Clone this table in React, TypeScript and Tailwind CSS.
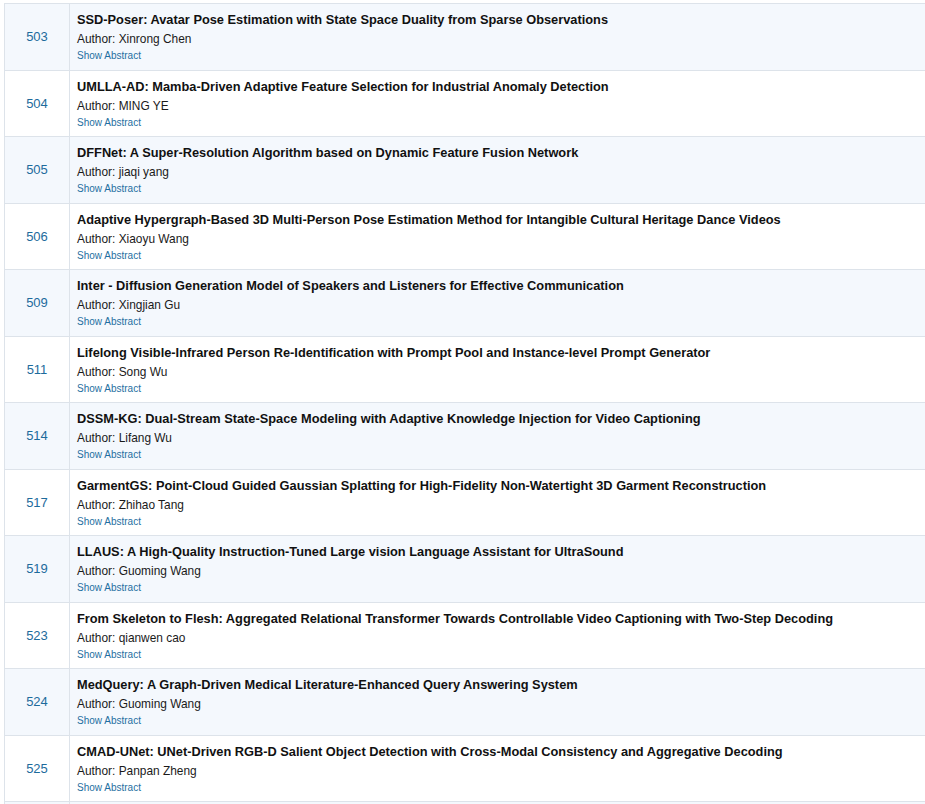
const papers = [
  { id: 503, title: "SSD-Poser: Avatar Pose Estimation with State Space Duality from Sparse Observations", author: "Xinrong Chen" },
  { id: 504, title: "UMLLA-AD: Mamba-Driven Adaptive Feature Selection for Industrial Anomaly Detection", author: "MING YE" },
  { id: 505, title: "DFFNet: A Super-Resolution Algorithm based on Dynamic Feature Fusion Network", author: "jiaqi yang" },
  { id: 506, title: "Adaptive Hypergraph-Based 3D Multi-Person Pose Estimation Method for Intangible Cultural Heritage Dance Videos", author: "Xiaoyu Wang" },
  { id: 509, title: "Inter - Diffusion Generation Model of Speakers and Listeners for Effective Communication", author: "Xingjian Gu" },
  { id: 511, title: "Lifelong Visible-Infrared Person Re-Identification with Prompt Pool and Instance-level Prompt Generator", author: "Song Wu" },
  { id: 514, title: "DSSM-KG: Dual-Stream State-Space Modeling with Adaptive Knowledge Injection for Video Captioning", author: "Lifang Wu" },
  { id: 517, title: "GarmentGS: Point-Cloud Guided Gaussian Splatting for High-Fidelity Non-Watertight 3D Garment Reconstruction", author: "Zhihao Tang" },
  { id: 519, title: "LLAUS: A High-Quality Instruction-Tuned Large vision Language Assistant for UltraSound", author: "Guoming Wang" },
  { id: 523, title: "From Skeleton to Flesh: Aggregated Relational Transformer Towards Controllable Video Captioning with Two-Step Decoding", author: "qianwen cao" },
  { id: 524, title: "MedQuery: A Graph-Driven Medical Literature-Enhanced Query Answering System", author: "Guoming Wang" },
  { id: 525, title: "CMAD-UNet: UNet-Driven RGB-D Salient Object Detection with Cross-Modal Consistency and Aggregative Decoding", author: "Panpan Zheng" },
];

export default function App() {
  return (
    <div
      className="h-[804px] w-[925px] overflow-hidden bg-white pl-[4px] pt-[3px]"
      style={{ fontFamily: '"Liberation Sans", Arial, Helvetica, sans-serif' }}
    >
      {/* paper list table */}
      <div className="border-l border-t border-[#dde3ea]">
        {papers.map((p, i) => (
          <div
            key={p.id}
            className={`flex h-[66.5px] border-b border-[#dde3ea] ${i % 2 === 0 ? "bg-[#f4f8fd]" : "bg-white"}`}
          >
            <div className="flex w-[65px] shrink-0 items-center justify-center border-r border-[#dde3ea] text-[13px] text-[#1d6b9c]">
              {p.id}
            </div>
            <div className="flex-1 pl-[7px] pt-[6px]">
              <div className="whitespace-nowrap text-[12.8px] font-bold leading-[19px] text-[#111]">{p.title}</div>
              <div className="text-[11.9px] leading-[20px] text-[#1a1a1a]">
                Author: {p.author}
              </div>
              <div className="text-[10px] leading-[14px] text-[#1f6fa1]">Show Abstract</div>
            </div>
          </div>
        ))}
        {/* next row, cut off by the window */}
        <div className="flex h-[20px] bg-[#f4f8fd]">
          <div className="w-[65px] shrink-0 border-r border-[#dde3ea]" />
        </div>
      </div>
    </div>
  );
}
